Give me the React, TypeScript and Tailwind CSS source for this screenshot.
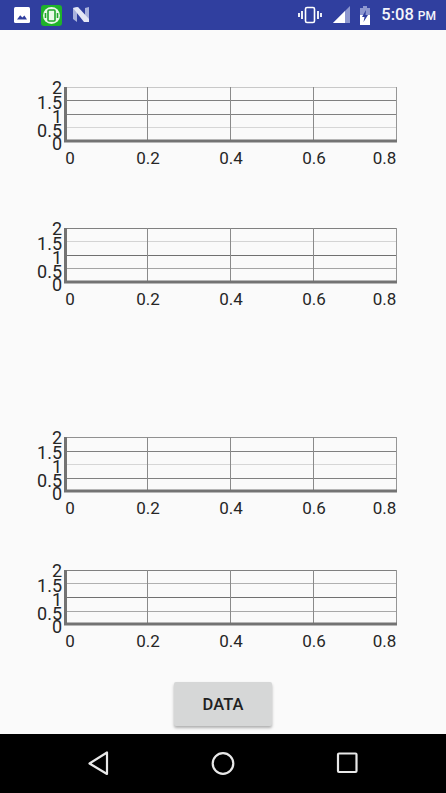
import React from "react";

const yLabels = [
  { text: "2", y: 14 },
  { text: "1.5", y: 29 },
  { text: "1", y: 43 },
  { text: "0.5", y: 57 },
  { text: "0", y: 70 },
];

const xLabels = [
  { text: "0", x: 70 },
  { text: "0.2", x: 148 },
  { text: "0.4", x: 231 },
  { text: "0.6", x: 314 },
  { text: "0.8", x: 384.500 },
];

type GridLine = { y: number; color: string };

// grid lines land on different sub pixels on the device, so each chart has its own shades
const chart1: GridLine[] = [
  { y: 7.5, color: "#c8c8c8" },
  { y: 20.5, color: "#808080" },
  { y: 34.5, color: "#808080" },
  { y: 47.5, color: "#d6d6d6" },
];
const chart2: GridLine[] = [
  { y: 7.5, color: "#808080" },
  { y: 20.5, color: "#d4d4d4" },
  { y: 34.5, color: "#707070" },
  { y: 47.5, color: "#a4a4a4" },
];
const chart3: GridLine[] = [
  { y: 7.5, color: "#909090" },
  { y: 21.5, color: "#808080" },
  { y: 34.5, color: "#d6d6d6" },
  { y: 48.5, color: "#808080" },
];
const chart4: GridLine[] = [
  { y: 7.5, color: "#808080" },
  { y: 20.5, color: "#b0b0b0" },
  { y: 34.5, color: "#707070" },
  { y: 48.5, color: "#a8a8a8" },
];

const Chart = ({ lines, className }: { lines: GridLine[]; className?: string }) => {
  return (
    <svg width="446" height="98" viewBox="0 -8 446 98" className={className}>
      {/* horizontal grid */}
      {lines.map((l) => (
        <line key={l.y} x1="66" x2="397" y1={l.y} y2={l.y} stroke={l.color} />
      ))}
      {/* vertical grid */}
      <line x1="147.5" x2="147.5" y1="7" y2="60" stroke="#8a8a8a" />
      <line x1="230.5" x2="230.5" y1="7" y2="60" stroke="#8a8a8a" />
      <line x1="313.5" x2="313.5" y1="7" y2="60" stroke="#8a8a8a" />
      <line x1="396.5" x2="396.5" y1="7" y2="60" stroke="#969696" />
      {/* axes */}
      <rect x="64" y="7" width="3" height="55" fill="#737373" />
      <rect x="64" y="59.500" width="333" height="3" fill="#737373" />
      {yLabels.map((l) => (
        <text key={l.text} x="62" y={l.y} textAnchor="end" fontSize="18" fill="#262626" fontFamily="Roboto, sans-serif">
          {l.text}
        </text>
      ))}
      {xLabels.map((l) => (
        <text key={l.text} x={l.x} y="83.500" textAnchor="middle" fontSize="17" fill="#262626" fontFamily="Roboto, sans-serif">
          {l.text}
        </text>
      ))}
    </svg>
  );
};

const StatusBar = () => {
  return (
    <div className="flex h-[30px] items-center justify-between bg-[#303f9f] pl-[14px] pr-[10px]">
      <div className="flex items-center">
        <svg width="16" height="16" viewBox="0 0 16 16">
          <rect width="16" height="16" rx="1.5" fill="#fff" />
          <path d="M3 12.5 6.2 8.2 8.4 10.6 10.4 8.4 13 12.5Z" fill="#303f9f" />
        </svg>
        <div className="ml-[11px] flex h-[21px] w-[21px] items-center justify-center rounded-[3px] bg-[#1fb32a]">
          <svg width="19" height="19" viewBox="0 0 19 19" fill="none">
            <circle cx="9.5" cy="9.5" r="8.5" fill="#e8f8e8" />
            <rect x="6" y="4" width="7" height="11" rx="1" stroke="#1fa52a" strokeWidth="1.6" />
            <path d="M3.5 7v5M15.5 7v5" stroke="#1fa52a" strokeWidth="1.6" />
          </svg>
        </div>
        <svg width="18" height="16" viewBox="0 0 18 16" className="ml-[10px]">
          <path d="M1 1 5 0 5 15 1 12Z" fill="#a9b2dc" />
          <path d="M13 1 17 0 17 15 13 12Z" fill="#a9b2dc" />
          <path d="M1 1 6 0 17 12 17 15 12 15Z" fill="#e4e7f5" />
        </svg>
      </div>
      <div className="flex items-center">
        <svg width="24" height="18" viewBox="0 0 24 18" fill="none">
          <rect x="7.5" y="1.5" width="9" height="15" rx="1.5" stroke="#fff" strokeWidth="1.6" />
          <path d="M4 5v8M20 5v8" stroke="#fff" strokeWidth="1.8" />
          <path d="M1 7v4M23 7v4" stroke="#fff" strokeWidth="1.8" />
        </svg>
        <svg width="18" height="18" viewBox="0 0 18 18" className="ml-[11px]">
          <path d="M0 17 17 0V17Z" fill="#8d97cf" />
          <path d="M0 17 12 5V17Z" fill="#fff" />
        </svg>
        <svg width="12" height="19" viewBox="0 0 12 19" className="ml-[8px]">
          <path d="M4 0h4v2h3v17H1V2h3Z" fill="#8d97cf" />
          <path d="M1 9h10v10H1Z" fill="#fff" />
          <path d="M7 4 3 11h2.500L4.500 16 9 9H6.500Z" fill="#303f9f" />
        </svg>
        <div className="ml-[10px] flex items-baseline font-['Roboto',sans-serif] text-[#f4f5fb]">
          <span className="text-[16.5px] font-medium">5:08</span>
          <span className="ml-[4px] text-[12px] font-medium">PM</span>
        </div>
      </div>
    </div>
  );
};

const NavBar = () => {
  return (
    <div className="flex h-[59px] items-center bg-black">
      <svg width="446" height="59" viewBox="0 0 446 59" fill="none" stroke="#e8e8e8" strokeWidth="2.200" strokeLinejoin="round">
        <path d="M89.500 29.500 107 18.500V40Z" />
        <circle cx="223" cy="29.500" r="10.300" />
        <rect x="338" y="19.500" width="18.500" height="18.500" rx="1" />
      </svg>
    </div>
  );
};

export default function App() {
  return (
    <div className="flex h-[793px] w-[446px] flex-col overflow-hidden bg-[#fafafa]">
      <StatusBar />
      <div className="flex flex-1 flex-col pt-[42px]">
        <Chart lines={chart1} className="shrink-0" />
        <Chart lines={chart2} className="mt-[43px] shrink-0" />
        <Chart lines={chart3} className="mt-[111px] shrink-0" />
        <Chart lines={chart4} className="mt-[35px] shrink-0" />
        <div className="mt-[29px] flex justify-center">
          <button className="h-[44px] w-[98px] rounded-[2px] bg-[#d6d7d7] pt-[2px] font-['Roboto',sans-serif] text-[16.500px] font-medium text-[#212121] shadow-[0_2px_3px_rgba(0,0,0,0.3)]">
            DATA
          </button>
        </div>
      </div>
      <NavBar />
    </div>
  );
}
